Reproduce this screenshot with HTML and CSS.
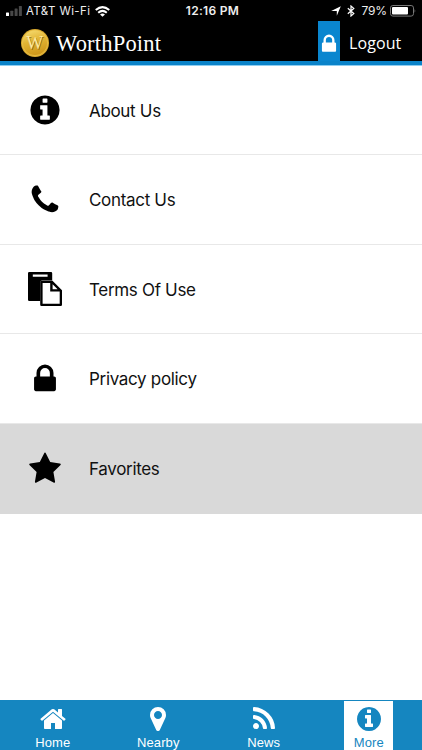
FILE: index.html
```html
<!DOCTYPE html>
<html lang="en">
<head>
<meta charset="utf-8">
<title>WorthPoint</title>
<link rel="stylesheet" href="styles.css">
</head>
<body>
<svg class="defs" width="0" height="0">
  <symbol id="info" viewBox="0 0 1792 1792"><path d="M1152 1376v-160q0-14-9-23t-23-9h-96v-512q0-14-9-23t-23-9h-320q-14 0-23 9t-9 23v160q0 14 9 23t23 9h96v320h-96q-14 0-23 9t-9 23v160q0 14 9 23t23 9h448q14 0 23-9t9-23zm-128-896v-160q0-14-9-23t-23-9h-192q-14 0-23 9t-9 23v160q0 14 9 23t23 9h192q14 0 23-9t9-23zm640 416q0 209-103 385.5t-279.5 279.5-385.5 103-385.5-103-279.5-279.5-103-385.5 103-385.5 279.5-279.5 385.5-103 385.5 103 279.5 279.5 103 385.5z"/></symbol>
  <symbol id="phone" viewBox="0 0 1792 1792"><path d="M1600 1240q0 27-10 70.5t-21 68.5q-21 50-122 106-94 51-186 51-27 0-53-3.5t-57.5-12.5-47-14.5-55.5-20.5-49-18q-98-35-175-83-127-79-264-216t-216-264q-48-77-83-175-3-9-18-49t-20.5-55.5-14.5-47-12.5-57.5-3.5-53q0-92 51-186 56-101 106-122 25-11 68.5-21t70.5-10q14 0 21 3 18 6 53 76 11 19 30 54t35 63.5 31 53.5q3 4 17.5 25t21.5 35.5 7 28.5q0 20-28.5 50t-62 55-62 53-28.5 46q0 9 5 22.5t8.5 20.5 14 24 11.5 19q76 137 174 235t235 174q2 1 19 11.5t24 14 20.5 8.5 22.5 5q18 0 46-28.5t53-62 55-62 50-28.5q14 0 28.5 7t35.5 21.5 25 17.5q25 15 53.5 31t63.5 35 54 30q70 35 76 53 3 7 3 21z"/></symbol>
  <symbol id="lock" viewBox="0 0 1792 1792"><path d="M640 768h512v-192q0-106-75-181t-181-75-181 75-75 181v192zm832 96v576q0 40-28 68t-68 28h-960q-40 0-68-28t-28-68v-576q0-40 28-68t68-28h32v-192q0-184 132-316t316-132 316 132 132 316v192h32q40 0 68 28t28 68z"/></symbol>
  <symbol id="star" viewBox="0 0 1792 1792"><path d="M1728 647q0 22-26 48l-363 354 86 500q1 7 1 20 0 21-10.5 35.5t-30.5 14.5q-19 0-40-12l-449-236-449 236q-22 12-40 12-21 0-31.5-14.5t-10.5-35.5q0-6 2-20l86-500-364-354q-25-27-25-48 0-37 56-46l502-73 225-455q19-41 49-41t49 41l225 455 502 73q56 9 56 46z"/></symbol>
  <symbol id="paste" viewBox="0 0 34 34"><path fill-rule="evenodd" d="M1.200 0H23q1.200 0 1.200 1.200V8.500H14q-1.800 0-1.800 1.800V29H1.200Q0 29 0 27.800V1.200Q0 0 1.200 0zM4.800 2.500v2.300h14.800V2.500z"/><path fill-rule="evenodd" d="M13.400 8.800H24.500L34 18.300V32.800Q34 34 32.800 34H13.400q-1.200 0-1.200-1.200V10q0-1.200 1.200-1.200zM14.600 11.100V31.700H31.700V19.500H22.200V11.100zM24.600 12.200V17.200H29.600z"/></symbol>
  <symbol id="home" viewBox="0 0 1792 1792"><path d="M1472 992v480q0 26-19 45t-45 19h-384v-384h-256v384h-384q-26 0-45-19t-19-45v-480q0-1 .5-3t.5-3l575-474 575 474q1 2 1 6zm223-69l-62 74q-8 9-21 11h-3q-13 0-21-7l-692-577-692 577q-12 8-24 7-13-2-21-11l-62-74q-8-10-7-23.5t11-21.5l719-599q32-26 76-26t76 26l244 204v-195q0-14 9-23t23-9h192q14 0 23 9t9 23v408l219 182q10 8 11 21.5t-7 23.5z"/></symbol>
  <symbol id="pin" viewBox="0 0 1792 1792"><path d="M1152 640q0-106-75-181t-181-75-181 75-75 181 75 181 181 75 181-75 75-181zm256 0q0 109-33 179l-364 774q-16 33-47.500 52t-67.500 19-67.500-19-46.500-52l-365-774q-33-70-33-179 0-212 150-362t362-150 362 150 150 362z"/></symbol>
  <symbol id="rss" viewBox="0 0 1792 1792"><path d="M576 1344q0 80-56 136t-136 56-136-56-56-136 56-136 136-56 136 56 56 136zm512 123q2 28-17 48-18 21-47 21h-135q-25 0-43-16.500t-20-41.500q-22-229-184.500-391.500t-391.500-184.500q-25-2-41.500-20t-16.500-43v-135q0-29 21-47 17-17 43-17h5q160 13 306 80.500t259 181.500q114 113 181.500 259t80.500 306zm512 2q2 27-18 47-18 20-46 20h-143q-26 0-44.500-17.500t-19.500-42.500q-12-215-101-408.500t-231.500-336-336-231.500-408.500-102q-25-1-42.500-19.500t-17.500-43.500v-143q0-28 20-46 18-18 44-18h3q262 13 501.500 120t425.500 294q187 186 294 425.500t120 501.500z"/></symbol>
</svg>
<div class="screen">
  <div class="status">
    <div class="carrier">
      <svg class="signal" width="16" height="11" viewBox="0 0 16 11"><rect x="0" y="6.500" width="3" height="3.500" rx=".6" fill="#fff"/><rect x="4.300" y="4.700" width="3" height="5.300" rx=".6"/><rect x="8.600" y="2.500" width="3" height="7.500" rx=".6"/><rect x="12.900" y="0" width="3" height="10" rx=".6"/></svg>
      <span class="network">AT&amp;T Wi-Fi</span>
      <svg class="wifi" width="15" height="11" viewBox="0 0 14 10"><path d="M.7 3.600Q7-1.800 13.300 3.600M3 6.100Q7 2.700 11 6.100" fill="none" stroke="#fff" stroke-width="1.900"/><path d="M7 10L4.700 7.700Q7 6 9.300 7.700z" fill="#fff"/></svg>
    </div>
    <span class="time">12:16 PM</span>
    <div class="power">
      <svg width="10" height="10" viewBox="0 0 10 10"><path d="M9.800.2L5.800 9.800V4.900H.2z" fill="#fff"/></svg>
      <svg class="bt" width="8" height="12" viewBox="0 0 8 12"><path d="M.8 3.200L6.800 8.600 4 11V1l2.800 2.400-6 5.400" fill="none" stroke="#fff" stroke-width="1.200"/></svg>
      <span class="percent">79%</span>
      <svg class="battery" width="26" height="12" viewBox="0 0 26 12"><rect x=".5" y=".5" width="23" height="10.600" rx="2.400" fill="none" stroke="#777"/><rect x="2" y="2" width="16" height="7.600" rx="1" fill="#fff"/><path d="M24.600 3.800q1.400 2 0 4z" fill="#777"/></svg>
    </div>
  </div>
  <header class="header">
    <svg class="coin" width="28" height="28" viewBox="0 0 28 28"><defs><linearGradient id="gold" x1="0" y1="0" x2=".3" y2="1"><stop offset="0" stop-color="#f8e077"/><stop offset=".5" stop-color="#e2b434"/><stop offset="1" stop-color="#cf991c"/></linearGradient></defs><circle cx="14" cy="14" r="14" fill="#d9a92e"/><circle cx="14" cy="14" r="12.700" fill="url(#gold)" stroke="#f2cb55" stroke-width=".6"/><text class="coin-letter shade" x="14.600" y="20.500">W</text><text class="coin-letter" x="13.800" y="20">W</text></svg>
    <span class="brand">WorthPoint</span>
    <div class="lockbox"><svg width="22" height="22"><use href="#lock"/></svg></div>
    <span class="logout">Logout</span>
  </header>
  <main class="menu">
    <div class="row"><svg><use href="#info"/></svg><span>About Us</span></div>
    <div class="row"><svg><use href="#phone"/></svg><span>Contact Us</span></div>
    <div class="row"><svg><use href="#paste"/></svg><span>Terms Of Use</span></div>
    <div class="row"><svg><use href="#lock"/></svg><span>Privacy policy</span></div>
    <div class="row selected"><svg><use href="#star"/></svg><span>Favorites</span></div>
  </main>
  <nav class="tabs">
    <div class="tab"><svg><use href="#home"/></svg><span>Home</span></div>
    <div class="tab"><svg><use href="#pin"/></svg><span>Nearby</span></div>
    <div class="tab"><svg><use href="#rss"/></svg><span>News</span></div>
    <div class="tab active"><svg><use href="#info"/></svg><span>More</span></div>
  </nav>
</div>
</body>
</html>
```
FILE: styles.css
```css
* { box-sizing: border-box; }
body { margin: 0; background: #fff; font-family: Inter, sans-serif; }
.defs { position: absolute; }
.screen { width: 422px; height: 750px; display: flex; flex-direction: column; overflow: hidden; }
svg { display: block; flex: none; }
span { white-space: nowrap; }

.status { height: 21px; background: #000; color: #eee; display: grid; grid-template-columns: 1fr auto 1fr; align-items: center; padding: 1px 6px 0; font-size: 11.5px; line-height: 20px; }
.carrier, .power { display: flex; align-items: center; }
.power { justify-content: flex-end; }
.signal { fill: #484848; margin-right: 4px; }
.network { letter-spacing: 0.4px; }
.wifi { margin-left: 5px; }
.time { font-weight: 600; font-size: 12px; letter-spacing: 0.3px; margin-left: 3px; }
.bt { margin-left: 6px; }
.percent { margin-left: 6px; font-size: 12px; letter-spacing: -0.1px; }
.battery { margin-left: 3px; margin-right: 0; }

.header { height: 44px; background: #000; border-bottom: 4px solid #0a83c9; display: flex; align-items: center; padding-left: 21px; color: #fff; }
.coin { margin-top: 4px; }
.coin-letter { font: 18px "Liberation Serif", serif; text-anchor: middle; fill: #fbe9a0; }
.shade { fill: #8c6510; }
.brand { margin: 5px 0 0 7px; width: 262px; font: 22.5px/30px "Liberation Serif", serif; letter-spacing: 0.2px; }
.lockbox { width: 22px; height: 100%; background: #0a86cf; fill: #fff; display: flex; align-items: center; padding-top: 5px; }
.logout { margin: 4px 0 0 9px; font: 16px/24px "Open Sans", sans-serif; letter-spacing: 0.1px; }

.menu { flex: 1; border-top: 1px solid #8dcdf0; display: grid; grid-template-rows: 89px 90px 89px 90px 90px; font-size: 17px; color: #111; }
.row { display: flex; align-items: center; padding-left: 28px; border-bottom: 1px solid #e8e8e8; }
.row svg { width: 34px; height: 34px; fill: #000; }
.row span { margin: 1px 0 0 27px; letter-spacing: -0.32px; }
.selected { background: #d9d9d9; border-color: #d9d9d9; }

.tabs { height: 50px; background: #1586c0; display: grid; grid-template-columns: repeat(4, 105.5px); justify-items: center; color: #fff; font: 13px/15px "Liberation Sans", sans-serif; }
.tab { width: 49px; height: 49px; margin-top: 1px; padding-top: 4px; display: flex; flex-direction: column; align-items: center; fill: currentColor; }
.tab svg { width: 28px; height: 28px; }
.tab span { margin-top: 2px; letter-spacing: 0.1px; }
.active { color: #1586c0; background: #fff; margin-right: 1px; }
```
